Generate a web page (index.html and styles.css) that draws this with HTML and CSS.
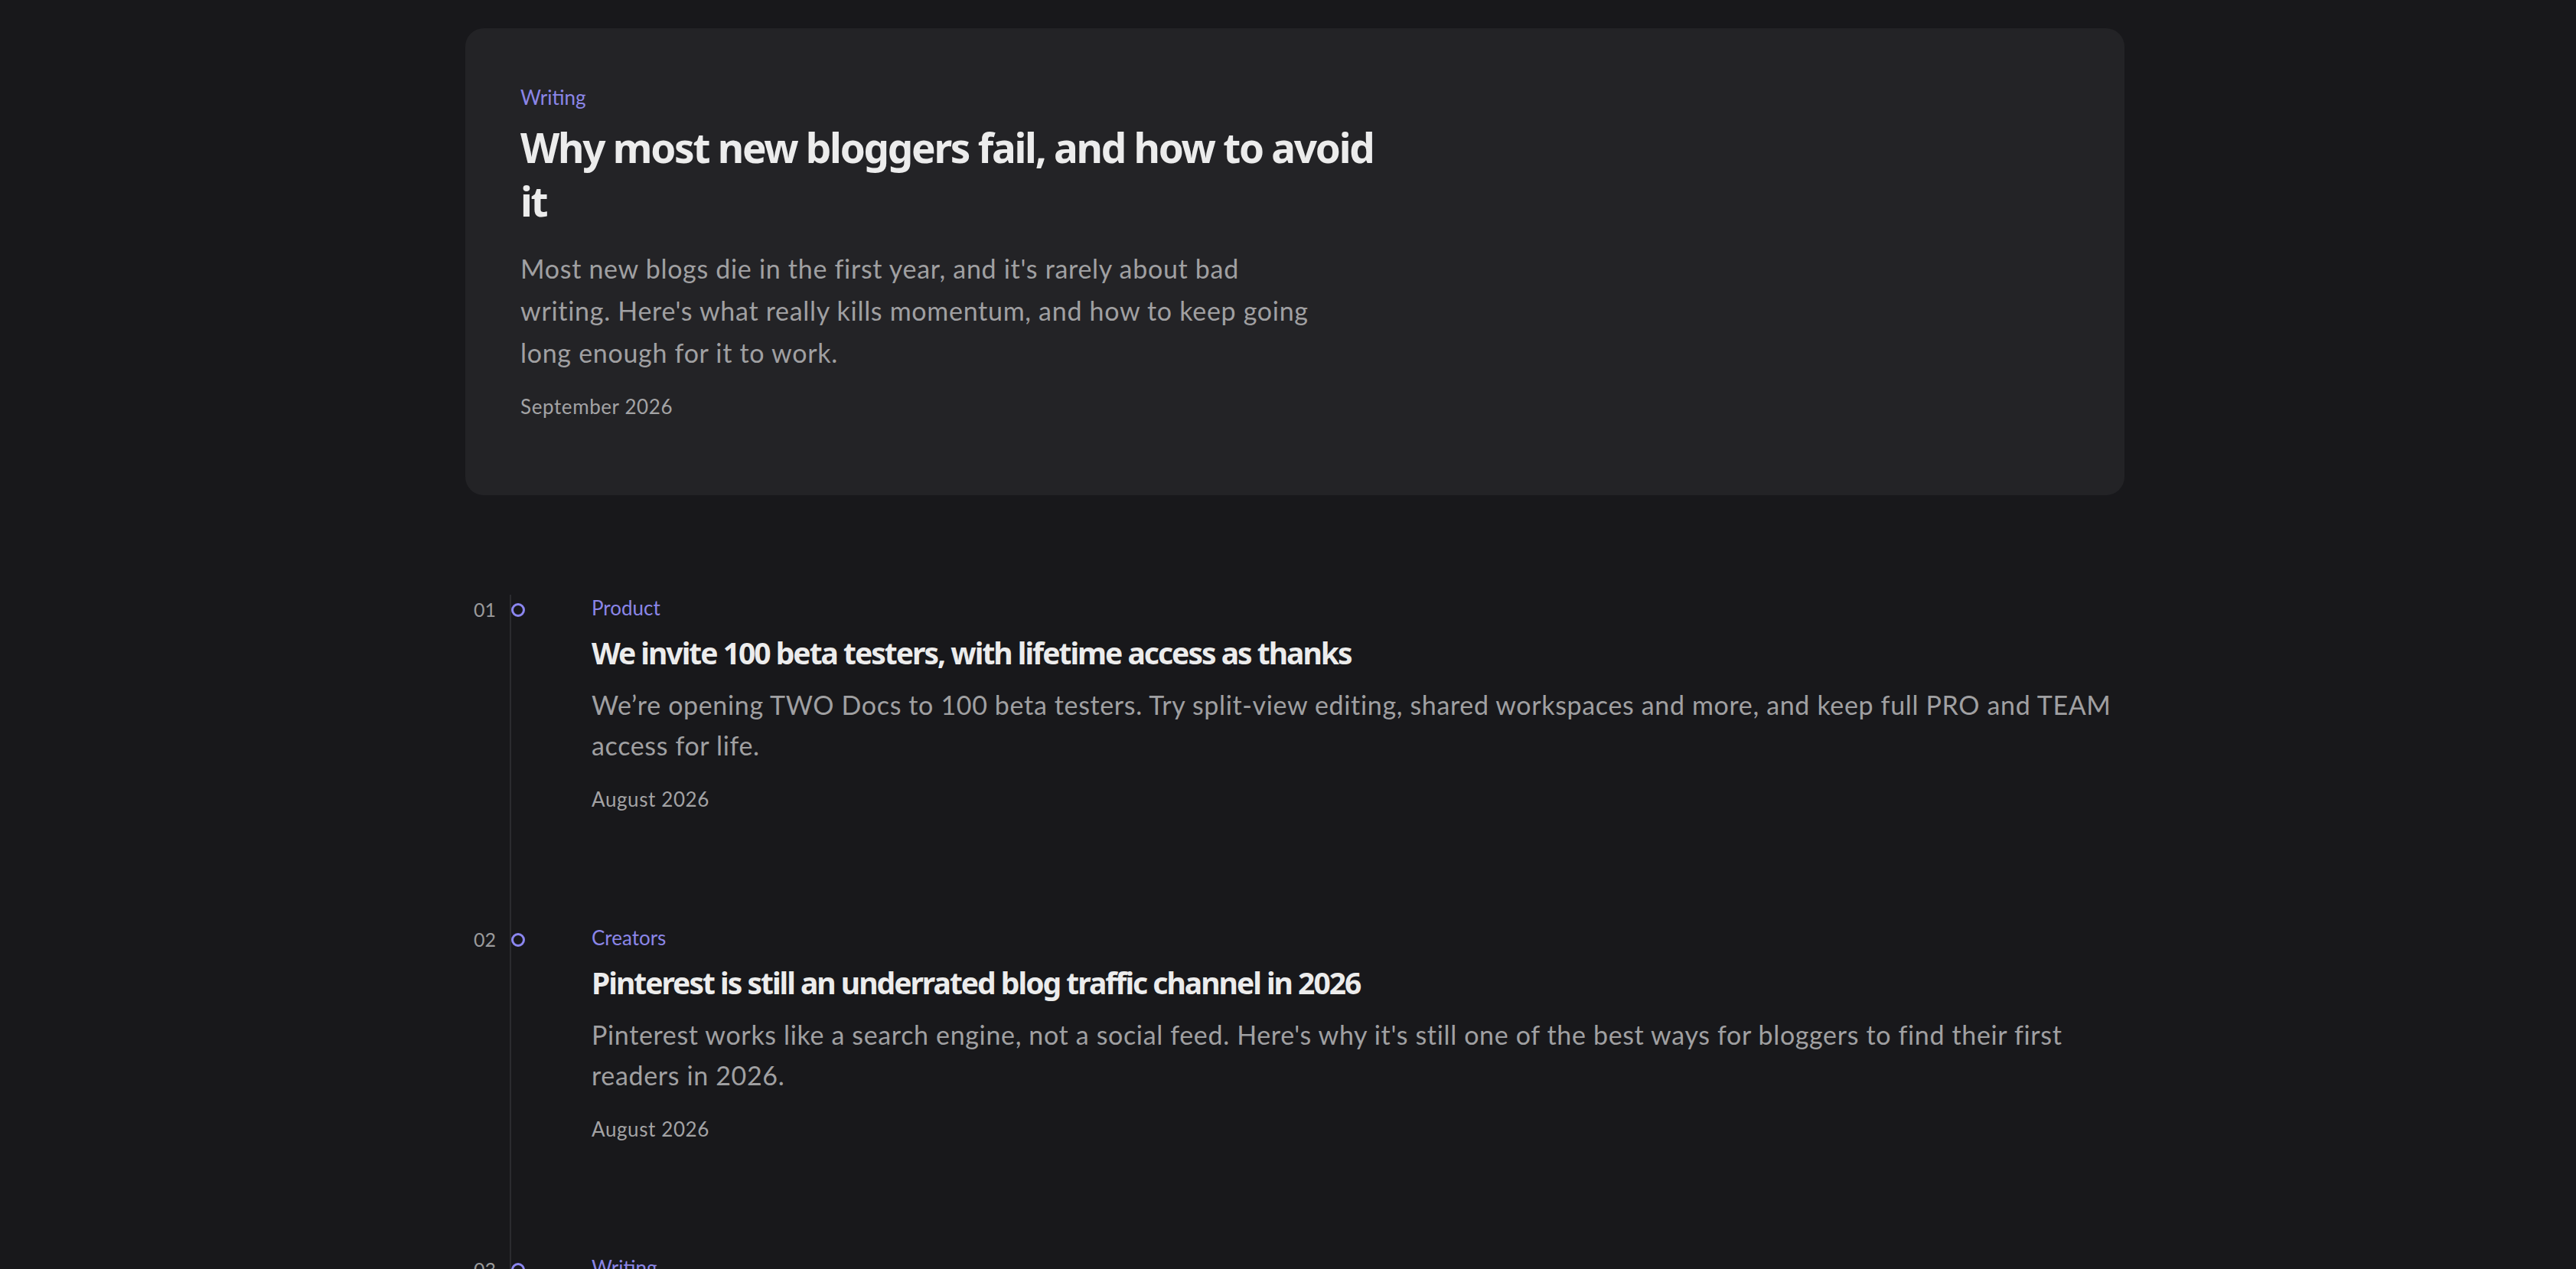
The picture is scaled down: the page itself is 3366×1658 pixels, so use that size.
FILE: index.html
```html
<!DOCTYPE html>
<html lang="en">
<head>
<meta charset="utf-8">
<title>Blog</title>
<link rel="stylesheet" href="styles.css">
</head>
<body>
<main class="page">
  <article class="feature">
    <div class="tag">Writing</div>
    <h1 class="feature-title">Why most new bloggers fail, and how to avoid it</h1>
    <p class="feature-desc">Most new blogs die in the first year, and it's rarely about bad writing. Here's what really kills momentum, and how to keep going long enough for it to work.</p>
    <div class="date">September 2026</div>
  </article>

  <ol class="timeline">
    <li class="item">
      <span class="num">01</span>
      <div class="rail"><span class="dot"></span></div>
      <div class="content">
        <div class="tag">Product</div>
        <h2 class="item-title">We invite 100 beta testers, with lifetime access as thanks</h2>
        <p class="item-desc">We’re opening TWO Docs to 100 beta testers. Try split-view editing, shared workspaces and more, and keep full PRO and TEAM access for life.</p>
        <div class="date item-date">August 2026</div>
      </div>
    </li>
    <li class="item">
      <span class="num">02</span>
      <div class="rail"><span class="dot"></span></div>
      <div class="content">
        <div class="tag">Creators</div>
        <h2 class="item-title">Pinterest is still an underrated blog traffic channel in 2026</h2>
        <p class="item-desc">Pinterest works like a search engine, not a social feed. Here's why it's still one of the best ways for bloggers to find their first readers in 2026.</p>
        <div class="date item-date">August 2026</div>
      </div>
    </li>
    <li class="item">
      <span class="num">03</span>
      <div class="rail"><span class="dot"></span></div>
      <div class="content">
        <div class="tag">Writing</div>
      </div>
    </li>
  </ol>
</main>
</body>
</html>
```
FILE: styles.css
```css
html, body {
  margin: 0;
  padding: 0;
  background: #18181b;
  height: 100%;
  overflow: hidden;
}
body {
  font-family: "Lato", "Inter", sans-serif;
  color: #9d9d9f;
}
.page {
  width: 2186px;
  box-sizing: border-box;
  padding-left: 18px;
  margin: 37px auto 0;
}
.feature {
  background: #232326;
  border-radius: 24px;
  padding: 73px 72px 99px;
}
.tag {
  font-size: 26px;
  line-height: 34px;
  color: #8b86e8;
}
.feature-title {
  margin: 14px 0 0;
  max-width: 1150px;
  font-family: "Noto Sans", "Open Sans", sans-serif;
  font-weight: 700;
  font-size: 53px;
  line-height: 70px;
  letter-spacing: -2.25px;
  color: #ececec;
}
.feature-desc {
  margin: 25px 0 0;
  max-width: 1045px;
  font-size: 34px;
  line-height: 55px;
  letter-spacing: 0.7px;
  color: #a0a0a2;
}
.date {
  margin-top: 26px;
  font-size: 26px;
  line-height: 34px;
  letter-spacing: 0.6px;
  color: #a3a3a5;
}
.timeline {
  list-style: none;
  margin: 130px 0 0;
  padding: 0;
}
.item {
  display: flex;
  align-items: stretch;
}
.num {
  width: 40px;
  margin-right: 18px;
  text-align: right;
  font-size: 25px;
  line-height: 34px;
  padding-top: 2px;
  color: #9a9a9c;
}
.rail {
  width: 105px;
  border-left: 2px solid #2b2b2f;
  padding-top: 11px;
}
.dot {
  display: block;
  width: 18px;
  height: 18px;
  box-sizing: border-box;
  border: 3px solid #8b86f0;
  border-radius: 50%;
}
.content {
  flex: 1;
  padding-bottom: 147px;
}
.item-title {
  margin: 17px 0 0;
  font-family: "Noto Sans", "Open Sans", sans-serif;
  font-weight: 700;
  font-size: 39px;
  line-height: 50px;
  letter-spacing: -2px;
  color: #ececec;
}
.item-desc {
  margin: 16px 0 0;
  font-size: 34px;
  line-height: 53px;
  letter-spacing: 0.65px;
  color: #a0a0a2;
}
.item-date {
  margin-top: 27px;
}
```
